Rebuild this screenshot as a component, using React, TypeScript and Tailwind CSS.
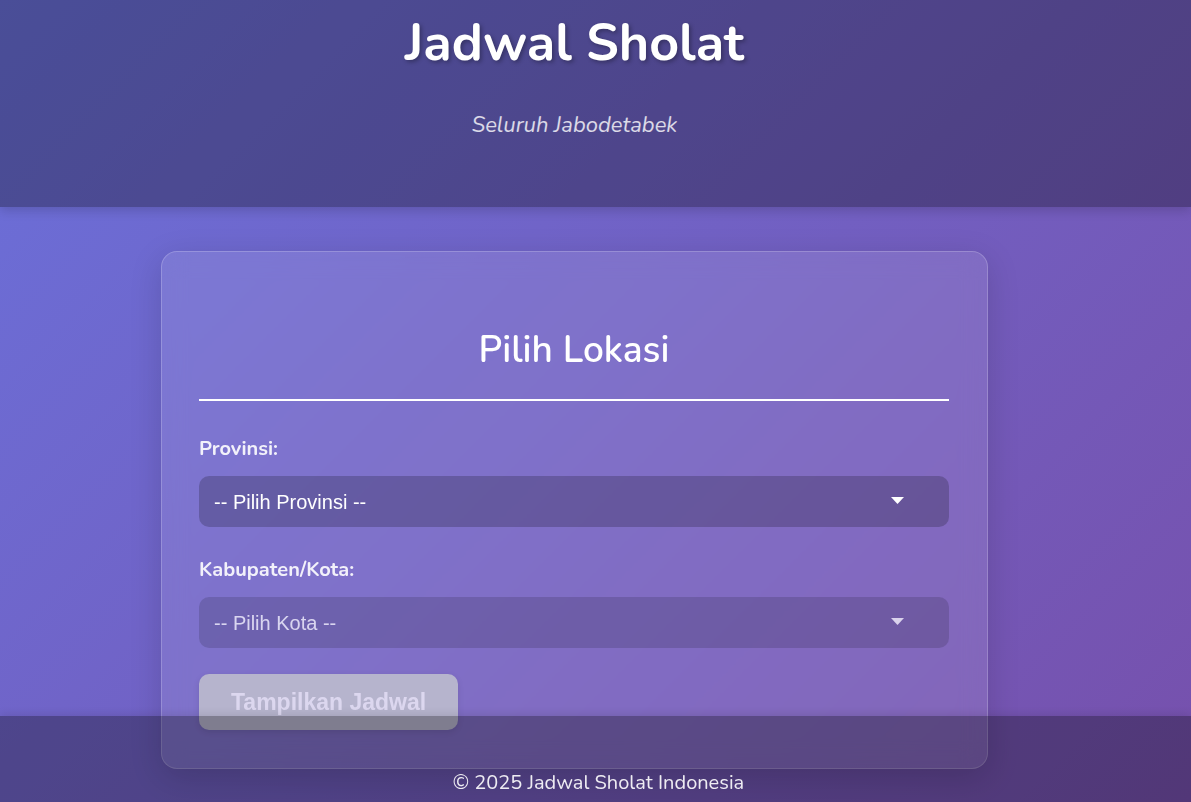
export default function App() {
  return (
    <div className="relative h-[802px] overflow-hidden bg-linear-135 from-[#6a70da] to-[#7650ac] font-['Nunito','Lato',sans-serif] text-white">
      {/* Header */}
      <header className="h-[207px] bg-black/30 shadow-[0_4px_10px_rgba(0,0,0,0.15)]">
        <div className="flex w-[1149px] flex-col items-center pt-[13px]">
          <h1 className="text-[52px] leading-[60px] font-bold [text-shadow:2px_2px_4px_rgba(0,0,0,0.3)]">
            Jadwal Sholat
          </h1>
          <p className="mt-[37px] text-[22px] leading-[30px] italic text-white/80">
            Seluruh Jabodetabek
          </p>
        </div>
      </header>

      {/* Konten */}
      <main className="w-[1149px] pt-[44px]">
        <section className="mx-auto w-[827px] rounded-2xl border border-white/20 bg-white/10 pt-[76px] pr-[38px] pb-[38px] pl-[37px] shadow-[0_8px_32px_rgba(0,0,0,0.15)] backdrop-blur-md">
          <h2 className="border-b-2 border-white pb-[27px] text-center text-[37px] leading-[44px] font-semibold">
            Pilih Lokasi
          </h2>

          <div className="mt-[35px]">
            <label className="block text-[20px] leading-[26px] font-bold text-white/90">
              Provinsi:
            </label>
            <div className="relative mt-[14px]">
              <select className="h-[51px] w-full appearance-none rounded-[10px] bg-black/20 px-[15px] font-['Liberation_Sans',Arial,sans-serif] text-[20px] text-white outline-none">
                <option>-- Pilih Provinsi --</option>
              </select>
              <svg
                className="pointer-events-none absolute top-[21px] right-[45px] h-[7px] w-[13px]"
                viewBox="0 0 13 7"
              >
                <path d="M0 0h13L6.5 7z" fill="white" />
              </svg>
            </div>
          </div>

          <div className="mt-[30px]">
            <label className="block text-[20px] leading-[26px] font-bold text-white/90">
              Kabupaten/Kota:
            </label>
            <div className="relative mt-[14px] opacity-70">
              <select
                disabled
                className="h-[51px] w-full appearance-none rounded-[10px] bg-black/20 px-[15px] font-['Liberation_Sans',Arial,sans-serif] text-[20px] text-white outline-none"
              >
                <option>-- Pilih Kota --</option>
              </select>
              <svg
                className="pointer-events-none absolute top-[21px] right-[45px] h-[7px] w-[13px]"
                viewBox="0 0 13 7"
              >
                <path d="M0 0h13L6.5 7z" fill="white" />
              </svg>
            </div>
          </div>

          <button
            disabled
            className="mt-[26px] h-[56px] rounded-[10px] bg-[#b6b4cd] px-[32px] font-['Liberation_Sans',Arial,sans-serif] text-[23px] font-bold text-[#dcd7ef] shadow-[0_2px_6px_rgba(0,0,0,0.1)]"
          >
            Tampilkan Jadwal
          </button>
        </section>
      </main>

      {/* Footer */}
      <footer className="fixed right-0 bottom-0 left-0 h-[86px] bg-black/30 pt-[53px] pl-[6px] text-center text-[20px] leading-[28px] text-white/90 shadow-[0_-2px_8px_rgba(0,0,0,0.1)]">
        © 2025 Jadwal Sholat Indonesia
      </footer>
    </div>
  );
}
